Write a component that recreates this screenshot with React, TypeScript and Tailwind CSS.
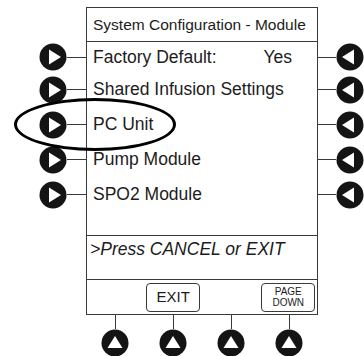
import React from "react";

function Knob({ dir }: { dir: "right" | "left" | "up" }) {
  // black round hardware key with a white arrow
  const tri =
    dir === "right" ? "10,6.5 10,21.5 22,14" : dir === "left" ? "18,6.5 18,21.5 6,14" : "6.5,19 21.5,19 14,7";
  return (
    <svg width="28" height="28" viewBox="0 0 28 28" className="shrink-0 block">
      <circle cx="14" cy="14" r="13.5" fill="#141414" />
      <polygon points={tri} fill="#fff" />
    </svg>
  );
}

const rows = [
  { label: "Factory Default:", value: "Yes", h: "h-[30px]" },
  { label: "Shared Infusion Settings", value: "", h: "h-[35px]" },
  { label: "PC Unit", value: "", h: "h-[35px]" },
  { label: "Pump Module", value: "", h: "h-[35px]" },
  { label: "SPO2 Module", value: "", h: "h-[35px]" },
];

export default function App() {
  return (
    <div className="relative w-[364px] h-[356px] bg-white text-[#1c1c1c] font-['Liberation_Sans',Arial,sans-serif] pt-[7px]">
      <div className="grid grid-cols-[86px_232px_46px]">
        {/* header */}
        <div />
        <div className="h-[35px] border border-[#3a3a3a] flex items-center pl-[6px] text-[15.5px]">
          System Configuration - Module
        </div>
        <div />

        {/* menu rows with side keys */}
        {rows.map((r) => (
          <React.Fragment key={r.label}>
            <div className={`${r.h} flex items-center justify-end`}>
              <Knob dir="right" />
              <div className="w-[19px] h-px bg-[#3a3a3a]" />
            </div>
            <div className={`${r.h} border-x border-[#3a3a3a] flex items-center justify-between pl-[6px] pr-[25px] text-[17.5px]`}>
              <span>{r.label}</span>
              <span>{r.value}</span>
            </div>
            <div className={`${r.h} flex items-center`}>
              <div className="w-[19px] h-px bg-[#3a3a3a]" />
              <Knob dir="left" />
            </div>
          </React.Fragment>
        ))}

        <div />
        <div className="h-[23px] border-x border-[#3a3a3a]" />
        <div />

        {/* prompt */}
        <div />
        <div className="h-[44px] border-x border-t border-[#3a3a3a] pl-[3px] pt-[3px] text-[17.5px] italic leading-[20px]">
          &gt;Press CANCEL or EXIT
        </div>
        <div />

        {/* soft keys */}
        <div />
        <div className="h-[36px] border border-[#3a3a3a] grid grid-cols-4 items-center">
          <div />
          <div className="flex justify-center">
            <div className="w-[54px] h-[29px] border border-[#3a3a3a] rounded-[4px] flex items-center justify-center text-[15px]">
              EXIT
            </div>
          </div>
          <div />
          <div className="flex justify-center">
            <div className="w-[54px] h-[29px] border border-[#3a3a3a] rounded-[4px] flex flex-col items-center justify-center text-[10px] leading-[11px]">
              <span>PAGE</span>
              <span>DOWN</span>
            </div>
          </div>
        </div>
        <div />

        {/* bottom keys */}
        <div />
        <div className="grid grid-cols-4">
          {[0, 1, 2, 3].map((i) => (
            <div key={i} className="flex flex-col items-center">
              <div className="w-px h-[14px] bg-[#3a3a3a]" />
              <Knob dir="up" />
            </div>
          ))}
        </div>
        <div />
      </div>

      {/* hand-drawn highlight around PC Unit */}
      <div className="absolute left-[14px] top-[98px] w-[162px] h-[53px] rounded-[50%] border-[3px] border-black" />
    </div>
  );
}
